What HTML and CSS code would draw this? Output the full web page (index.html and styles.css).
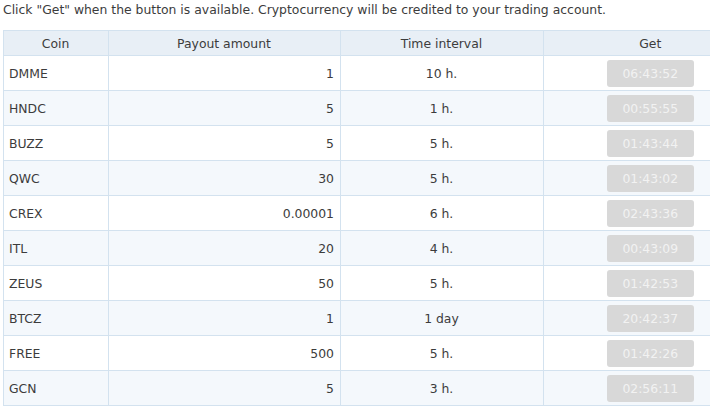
FILE: index.html
```html
<!DOCTYPE html>
<html><head><meta charset="utf-8"><link rel="stylesheet" href="styles.css"></head>
<body>
<div class="page">
<p class="note">Click "Get" when the button is available. Cryptocurrency will be credited to your trading account.</p>
<table class="faucets">
<colgroup><col class="c-coin"><col class="c-amt"><col class="c-int"><col class="c-get"></colgroup>
<thead>
<tr><th>Coin</th><th>Payout amount</th><th>Time interval</th><th class="get">Get</th></tr>
</thead>
<tbody>
<tr><td>DMME</td><td class="num">1</td><td class="mid">10 h.</td><td class="get"><button class="btn" disabled>06:43:52</button></td></tr>
<tr><td>HNDC</td><td class="num">5</td><td class="mid">1 h.</td><td class="get"><button class="btn" disabled>00:55:55</button></td></tr>
<tr><td>BUZZ</td><td class="num">5</td><td class="mid">5 h.</td><td class="get"><button class="btn" disabled>01:43:44</button></td></tr>
<tr><td>QWC</td><td class="num">30</td><td class="mid">5 h.</td><td class="get"><button class="btn" disabled>01:43:02</button></td></tr>
<tr><td>CREX</td><td class="num">0.00001</td><td class="mid">6 h.</td><td class="get"><button class="btn" disabled>02:43:36</button></td></tr>
<tr><td>ITL</td><td class="num">20</td><td class="mid">4 h.</td><td class="get"><button class="btn" disabled>00:43:09</button></td></tr>
<tr><td>ZEUS</td><td class="num">50</td><td class="mid">5 h.</td><td class="get"><button class="btn" disabled>01:42:53</button></td></tr>
<tr><td>BTCZ</td><td class="num">1</td><td class="mid">1 day</td><td class="get"><button class="btn" disabled>20:42:37</button></td></tr>
<tr><td>FREE</td><td class="num">500</td><td class="mid">5 h.</td><td class="get"><button class="btn" disabled>01:42:26</button></td></tr>
<tr><td>GCN</td><td class="num">5</td><td class="mid">3 h.</td><td class="get"><button class="btn" disabled>02:56:11</button></td></tr>
</tbody>
</table>
</div>
</body></html>
```
FILE: styles.css
```css
html,body{margin:0;padding:0;overflow:hidden;background:#fff}
body{font-family:"DejaVu Sans",Verdana,sans-serif;font-size:12.4px;color:#3c3c3c}
.page{padding:0 0 0 3px}
.note{margin:0;height:30px;line-height:20px;white-space:nowrap}
.faucets{border-collapse:collapse;table-layout:fixed;width:708px}
.faucets th,.faucets td{border:1px solid #d3e2ef;padding:0 6px 0 5px}
.faucets th{background:#e8eff6;height:24px;font-weight:normal;text-align:center}
.faucets td{height:34px}
.faucets tbody tr:nth-child(even) td{background:#f4f8fc}
.faucets .get{border-right:0;text-align:center;padding:0 0 0 45px}
.c-coin{width:105px}
.c-amt{width:232px}
.c-int{width:203px}
.c-get{width:168px}
.num{text-align:right}
.mid{text-align:center}
.btn{font:inherit;width:87px;height:27px;border:0;border-radius:3px;background:#d8d8d8;color:#f2f2f2;padding:0;vertical-align:middle;display:inline-block}
```
